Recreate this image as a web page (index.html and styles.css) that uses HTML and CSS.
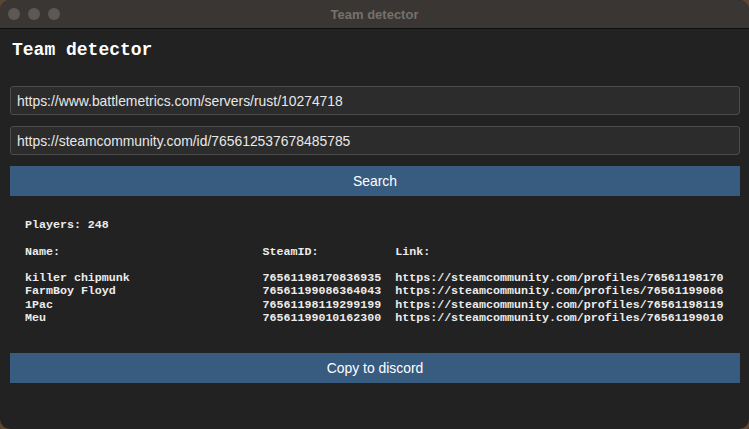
FILE: index.html
```html
<!DOCTYPE html>
<html>
<head>
<meta charset="utf-8">
<title>Team detector</title>
<link rel="stylesheet" href="styles.css">
</head>
<body>
<div class="window">
  <div class="titlebar">
    <div class="lights"><span class="light"></span><span class="light"></span><span class="light"></span></div>
    <div class="title">Team detector</div>
  </div>
  <div class="content">
    <h1 class="heading">Team detector</h1>
    <div class="field">https://www.battlemetrics.com/servers/rust/10274718</div>
    <div class="field">https://steamcommunity.com/id/765612537678485785</div>
    <div class="button">Search</div>
    <pre class="output">Players: 248

Name:                             SteamID:           Link:

killer chipmunk                   76561198170836935  https://steamcommunity.com/profiles/76561198170
FarmBoy Floyd                     76561199086364043  https://steamcommunity.com/profiles/76561199086
1Pac                              76561198119299199  https://steamcommunity.com/profiles/76561198119
Meu                               76561199010162300  https://steamcommunity.com/profiles/76561199010</pre>
    <div class="button copy">Copy to discord</div>
  </div>
</div>
</body>
</html>
```
FILE: styles.css
```css
html, body {
  margin: 0;
  padding: 0;
  background: #5a4632;
}

.window {
  width: 749px;
  height: 429px;
  border-radius: 10px;
  overflow: hidden;
  background: #222222;
  display: flex;
  flex-direction: column;
  box-sizing: border-box;
}

.titlebar {
  height: 28px;
  flex: 0 0 28px;
  background: #3a3633;
  border-top: 1px solid #5e5a57;
  border-bottom: 1px solid #0e0e0e;
  box-sizing: content-box;
  display: flex;
  align-items: center;
  position: relative;
  margin-top: -1px;
}

.lights {
  display: flex;
  gap: 8px;
  padding-left: 8px;
}

.light {
  width: 12px;
  height: 12px;
  border-radius: 50%;
  background: #5b5856;
}

.title {
  position: absolute;
  left: 0;
  right: 0;
  text-align: center;
  font-family: "Liberation Sans", Arial, sans-serif;
  font-weight: bold;
  font-size: 13px;
  color: #75716d;
}

.content {
  padding: 10px 9px 0 10px;
  display: flex;
  flex-direction: column;
}

.heading {
  margin: 0 0 25px 2px;
  font-family: "Liberation Mono", "Courier New", monospace;
  font-weight: bold;
  font-size: 18px;
  line-height: 22px;
  color: #ffffff;
}

.field {
  height: 27px;
  border: 1px solid #4c4c4c;
  border-radius: 3px;
  background: #2c2c2c;
  color: #e8e8e8;
  font-family: "Liberation Sans", Arial, sans-serif;
  font-size: 13.9px;
  line-height: 28px;
  padding-left: 6px;
  margin-bottom: 11px;
}

.button {
  height: 30px;
  background: #385b80;
  color: #ffffff;
  font-family: "Liberation Sans", Arial, sans-serif;
  font-size: 13.9px;
  line-height: 30px;
  text-align: center;
}

.output {
  margin: 22px 0 29px 15px;
  font-family: "Liberation Mono", "Courier New", monospace;
  font-weight: bold;
  font-size: 11.65px;
  line-height: 13.3px;
  color: #ececec;
}
```
